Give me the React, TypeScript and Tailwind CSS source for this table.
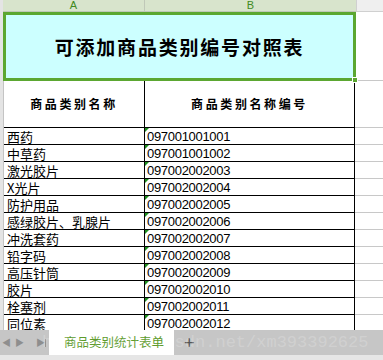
import React from 'react';

const rows: [string, string][] = [
  ['西药', '097001001001'],
  ['中草药', '097001001002'],
  ['激光胶片', '097002002003'],
  ['X光片', '097002002004'],
  ['防护用品', '097002002005'],
  ['感绿胶片、乳腺片', '097002002006'],
  ['冲洗套药', '097002002007'],
  ['铅字码', '097002002008'],
  ['高压针筒', '097002002009'],
  ['胶片', '097002002010'],
  ['栓塞剂', '097002002011'],
  ['同位素', '097002002012'],
];

const cjk = { fontFamily: '"Noto Sans CJK SC", "Liberation Sans", sans-serif' };
const num = { fontFamily: '"Liberation Sans", Arial, sans-serif' };

export default function App() {
  return (
    <div className="relative w-[383px] h-[360px] overflow-hidden bg-white" style={cjk}>
      {/* column headers */}
      <div className="flex h-[12px]">
        <div className="w-[3px] bg-[#e4e4e4]" />
        <div className="w-[142px] bg-[#d8e4cc] border-r border-[#c0c8b8] border-b border-b-[#c0c8b8] flex items-center justify-center text-[11px] leading-none text-[#3f8a22]" style={num}>A</div>
        <div className="w-[211px] bg-[#d8e4cc] border-b border-[#c0c8b8] flex items-center justify-center text-[11px] leading-none text-[#3f8a22]" style={num}>B</div>
        <div className="flex-1 bg-[#efefef] border-b border-l border-[#d0d0d0]" />
      </div>

      {/* title cell */}
      <div className="flex h-[69px]">
        <div className="w-[3px] bg-[#e4e4e4]" />
        <div className="relative w-[353px] border-[3px] border-[#5ba731] bg-[#ccffff] flex items-center justify-center">
          <span className="text-[19px] font-bold tracking-[1.8px] text-black leading-none">可添加商品类别编号对照表</span>
          <div className="absolute -right-[5px] -bottom-[5px] w-[6px] h-[6px] bg-[#5ba731] border border-white" />
        </div>
        <div className="flex-1 border-b border-[#c8c8c8]" />
      </div>

      {/* header row */}
      <div className="flex h-[47px]">
        <div className="w-[3px] bg-[#e4e4e4] border-r border-[#c4c4c4] box-content" />
        <div className="w-[141px] border-r border-b border-black flex items-center justify-center">
          <span className="text-[12px] font-bold tracking-[2.6px] leading-none">商品类别名称</span>
        </div>
        <div className="w-[210px] border-r border-b border-black flex items-center justify-center">
          <span className="text-[12px] font-bold tracking-[2.6px] leading-none">商品类别名称编号</span>
        </div>
        <div className="flex-1 border-b border-[#c8c8c8]" />
      </div>

      {/* data rows */}
      {rows.map(([name, code]) => (
        <div key={code} className="flex h-[17px]">
          <div className="w-[3px] bg-[#e4e4e4] border-r border-[#c4c4c4] box-content" />
          <div className="w-[141px] border-r border-b border-black flex items-end pl-[3px] pb-[1px]">
            <span className="text-[13px] leading-none text-black whitespace-nowrap">{name}</span>
          </div>
          <div className="relative w-[210px] border-r border-b border-black flex items-end pl-[2px] pb-[1px]">
            <div className="absolute left-0 top-0 w-0 h-0 border-t-[4px] border-r-[4px] border-t-[#1f8f1f] border-r-transparent" />
            <span className="text-[13px] tracking-[-0.3px] leading-none text-black" style={num}>{code}</span>
          </div>
          <div className="flex-1 border-b border-[#c8c8c8]" />
        </div>
      ))}

      {/* sheet tab bar */}
      <div className="absolute left-0 top-[330px] w-full h-[30px] flex flex-col">
        <div className="flex h-[25px] bg-[#c6c6c6]">
          <div className="w-[49px] flex items-center gap-[4px] pl-[2px] text-[9px] text-[#8e8e8e] leading-none">
            <span>◀</span>
            <span>▶</span>
            <span className="ml-[8px] flex items-center">▶<span className="w-[1px] h-[8px] bg-[#8e8e8e]" /></span>
          </div>
          <div className="w-[125px] bg-white flex items-center justify-center text-[12.5px] text-[#5d9b2c] leading-none pl-[5px]">
            商品类别统计表单
          </div>
          <div className="flex items-center pl-[10px] text-[18px] font-light text-[#555] leading-none" style={num}>+</div>
        </div>
        <div className="flex-1 bg-[#e6e6e6]" />
      </div>

      {/* watermark */}
      <div className="absolute left-[42px] top-[334px] text-[17px] leading-none text-white/20 whitespace-nowrap pointer-events-none" style={{ fontFamily: '"Liberation Mono", monospace' }}>
        http://blog.csdn.net/xm393392625
      </div>
    </div>
  );
}
